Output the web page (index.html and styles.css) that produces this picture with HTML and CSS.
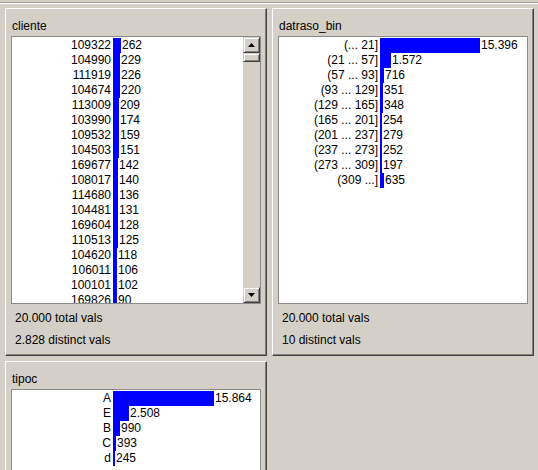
FILE: index.html
```html
<!DOCTYPE html>
<html>
<head>
<meta charset="utf-8">
<link rel="stylesheet" href="styles.css">
</head>
<body>
<div class="topline"></div>
<div class="grid">
  <section class="panel">
    <div class="title">cliente</div>
    <div class="list tall">
      <div class="rows">
        <div class="row"><span class="label">109322</span><span class="bar" style="width:8px"></span><span class="count">262</span></div>
        <div class="row"><span class="label">104990</span><span class="bar" style="width:7px"></span><span class="count">229</span></div>
        <div class="row"><span class="label">111919</span><span class="bar" style="width:7px"></span><span class="count">226</span></div>
        <div class="row"><span class="label">104674</span><span class="bar" style="width:7px"></span><span class="count">220</span></div>
        <div class="row"><span class="label">113009</span><span class="bar" style="width:6px"></span><span class="count">209</span></div>
        <div class="row"><span class="label">103990</span><span class="bar" style="width:6px"></span><span class="count">174</span></div>
        <div class="row"><span class="label">109532</span><span class="bar" style="width:6px"></span><span class="count">159</span></div>
        <div class="row"><span class="label">104503</span><span class="bar" style="width:6px"></span><span class="count">151</span></div>
        <div class="row"><span class="label">169677</span><span class="bar" style="width:5px"></span><span class="count">142</span></div>
        <div class="row"><span class="label">108017</span><span class="bar" style="width:5px"></span><span class="count">140</span></div>
        <div class="row"><span class="label">114680</span><span class="bar" style="width:5px"></span><span class="count">136</span></div>
        <div class="row"><span class="label">104481</span><span class="bar" style="width:5px"></span><span class="count">131</span></div>
        <div class="row"><span class="label">169604</span><span class="bar" style="width:5px"></span><span class="count">128</span></div>
        <div class="row"><span class="label">110513</span><span class="bar" style="width:5px"></span><span class="count">125</span></div>
        <div class="row"><span class="label">104620</span><span class="bar" style="width:4px"></span><span class="count">118</span></div>
        <div class="row"><span class="label">106011</span><span class="bar" style="width:4px"></span><span class="count">106</span></div>
        <div class="row"><span class="label">100101</span><span class="bar" style="width:4px"></span><span class="count">102</span></div>
        <div class="row"><span class="label">169826</span><span class="bar" style="width:4px"></span><span class="count">90</span></div>
      </div>
      <div class="scrollbar">
        <div class="sbtn"><svg width="7" height="4" viewBox="0 0 7 4"><polygon points="3.5,0 7,4 0,4" fill="#000"/></svg></div>
        <div class="thumb"></div>
        <div class="track"></div>
        <div class="sbtn"><svg width="7" height="4" viewBox="0 0 7 4"><polygon points="0,0 7,0 3.5,4" fill="#000"/></svg></div>
      </div>
    </div>
    <div class="stat">20.000 total vals</div>
    <div class="stat">2.828 distinct vals</div>
  </section>

  <section class="panel">
    <div class="title">datraso_bin</div>
    <div class="list tall">
      <div class="rows">
        <div class="row"><span class="label">(... 21]</span><span class="bar" style="width:100px"></span><span class="count">15.396</span></div>
        <div class="row"><span class="label">(21 ... 57]</span><span class="bar" style="width:11px"></span><span class="count">1.572</span></div>
        <div class="row"><span class="label">(57 ... 93]</span><span class="bar" style="width:4px"></span><span class="count">716</span></div>
        <div class="row"><span class="label">(93 ... 129]</span><span class="bar" style="width:3px"></span><span class="count">351</span></div>
        <div class="row"><span class="label">(129 ... 165]</span><span class="bar" style="width:3px"></span><span class="count">348</span></div>
        <div class="row"><span class="label">(165 ... 201]</span><span class="bar" style="width:2px"></span><span class="count">254</span></div>
        <div class="row"><span class="label">(201 ... 237]</span><span class="bar" style="width:2px"></span><span class="count">279</span></div>
        <div class="row"><span class="label">(237 ... 273]</span><span class="bar" style="width:2px"></span><span class="count">252</span></div>
        <div class="row"><span class="label">(273 ... 309]</span><span class="bar" style="width:2px"></span><span class="count">197</span></div>
        <div class="row"><span class="label">(309 ...]</span><span class="bar" style="width:4px"></span><span class="count">635</span></div>
      </div>
    </div>
    <div class="stat">20.000 total vals</div>
    <div class="stat">10 distinct vals</div>
  </section>

  <section class="panel">
    <div class="title">tipoc</div>
    <div class="list tall">
      <div class="rows">
        <div class="row"><span class="label">A</span><span class="bar" style="width:101px"></span><span class="count">15.864</span></div>
        <div class="row"><span class="label">E</span><span class="bar" style="width:16px"></span><span class="count">2.508</span></div>
        <div class="row"><span class="label">B</span><span class="bar" style="width:7px"></span><span class="count">990</span></div>
        <div class="row"><span class="label">C</span><span class="bar" style="width:3px"></span><span class="count">393</span></div>
        <div class="row"><span class="label">d</span><span class="bar" style="width:2px"></span><span class="count">245</span></div>
      </div>
    </div>
  </section>
</div>
</body>
</html>
```

FILE: styles.css
```css
html, body {
  margin: 0;
  padding: 0;
  background: #d4d0c8;
  overflow: hidden;
  font-family: "Liberation Sans", Arial, sans-serif;
  font-size: 12px;
  color: #000;
}

.topline {
  margin-top: 2px;
  height: 0;
  border-top: 1px solid #a0a0a0;
  border-bottom: 1px solid #fff;
}

.grid {
  display: grid;
  grid-template-columns: 262px 262px;
  column-gap: 5px;
  row-gap: 5px;
  margin-top: 4px;
  padding-left: 5px;
}

.panel {
  border: 1px solid;
  border-color: #fff #404040 #404040 #fff;
  box-shadow: inset -1px -1px #808080;
  padding: 10px 5px 7px 5px;
  display: flex;
  flex-direction: column;
}

.title {
  line-height: 15px;
  height: 15px;
  padding-left: 1px;
  margin-bottom: 2px;
}

.list {
  background: #fff;
  border: 1px solid #8c8c8c;
  display: flex;
  overflow: hidden;
}

.list.tall {
  height: 266px;
}

.rows {
  flex: 1;
  padding-top: 1px;
  min-width: 0;
}

.row {
  display: flex;
  align-items: center;
  height: 15px;
  line-height: 15px;
  white-space: nowrap;
}

.label {
  width: 99px;
  text-align: right;
  flex: none;
}

.bar {
  flex: none;
  height: 15px;
  margin-left: 2px;
  background: #0000ff;
}

.count {
  margin-left: 1px;
}

.scrollbar {
  width: 17px;
  flex: none;
  display: flex;
  flex-direction: column;
  background: #d4d0c8;
}

.sbtn, .thumb {
  box-sizing: border-box;
  border: 1px solid;
  border-color: #d4d0c8 #404040 #404040 #d4d0c8;
  box-shadow: inset 1px 1px #fff, inset -1px -1px #808080;
  background: #d4d0c8;
}

.sbtn {
  height: 16px;
  display: flex;
  align-items: center;
  justify-content: center;
}

.sbtn svg {
  display: block;
}

.thumb {
  height: 9px;
}

.track {
  flex: 1;
}

.stat {
  line-height: 15px;
  height: 15px;
  margin-top: 7px;
  padding-left: 4px;
}
```
